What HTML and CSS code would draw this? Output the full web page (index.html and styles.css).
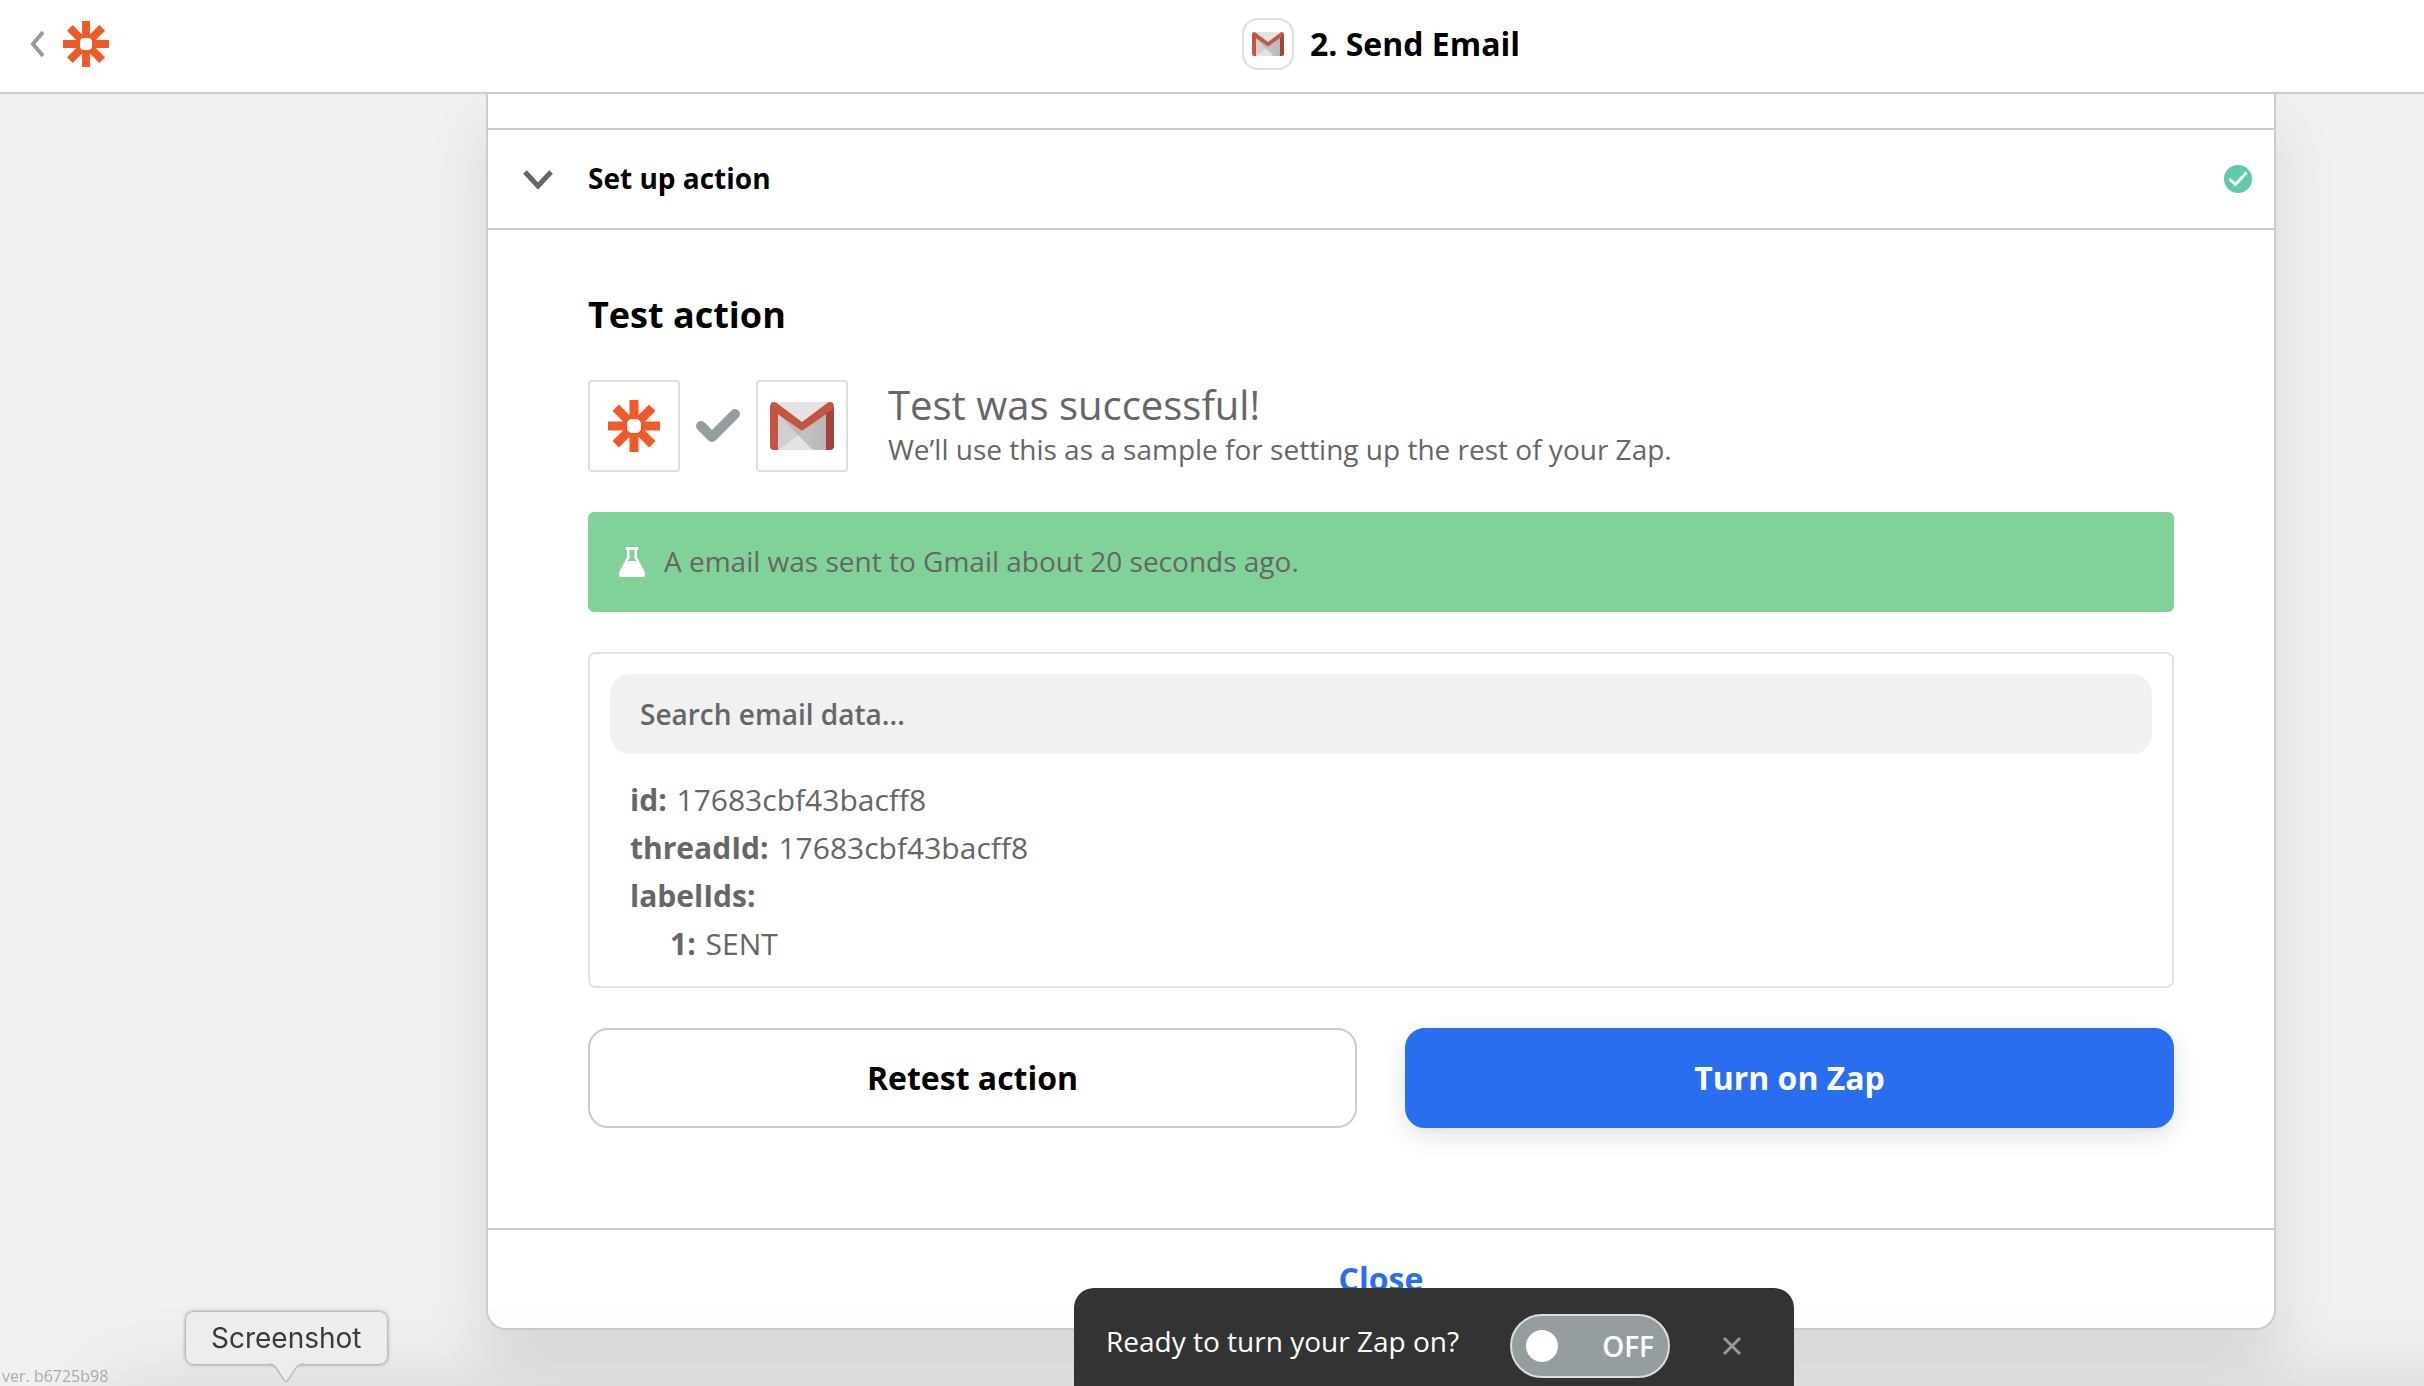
FILE: index.html
```html
<!DOCTYPE html>
<html lang="en">
<head>
<meta charset="utf-8">
<meta name="viewport" content="width=device-width, initial-scale=1">
<title>2. Send Email</title>
<link rel="stylesheet" href="styles.css">
</head>
<body>
<svg class="defs" aria-hidden="true">
  <defs>
    <linearGradient id="fold" x1="0" y1="0" x2="1" y2="0">
      <stop offset="0" stop-color="#cccccc"/>
      <stop offset="1" stop-color="#b8b8b8"/>
    </linearGradient>
  </defs>
  <symbol id="zapier" viewBox="0 0 46 46">
    <g stroke="#f05a28" stroke-width="8" fill="none">
      <path d="M23 0V17M23 29V46M0 23H17M29 23H46M6.8 6.8L18.5 18.5M27.5 27.5L39.2 39.2M39.2 6.8L27.5 18.5M18.5 27.5L6.8 39.2"/>
    </g>
    <rect x="17" y="17" width="12" height="12" rx="4" fill="#fff"/>
  </symbol>
  <symbol id="gmail" viewBox="0 0 64 48">
    <path d="M4 0H60V48H4Z" fill="#e3e3e3"/>
    <path d="M8 11L32 29L56 11V48H43L28 33L8 48Z" fill="url(#fold)"/>
    <path d="M8 11L28 33L8 48Z" fill="#d0d0d0"/>
    <path d="M8 11L17 19L32 30L28 33Z" fill="#b9b9b9"/>
    <path d="M0 4V44Q0 48 4 48H8V9Z" fill="#c75344"/>
    <path d="M64 4V44Q64 48 60 48H56V9Z" fill="#a34236"/>
    <path d="M0 5Q0 0 4 0Q6 0 8 2L32 20L56 2Q58 0 60 0Q64 0 64 5Q64 6 62 8L32 29L2 8Q0 6 0 5Z" fill="#c75344"/>
  </symbol>
</svg>

<header class="topbar">
  <div class="topbar-nav">
    <button class="back" aria-label="Back">
      <svg width="16" height="28" viewBox="0 0 16 28"><path d="M13 2L3 14L13 26" fill="none" stroke="#999" stroke-width="4"/></svg>
    </button>
    <a class="home" href="#" aria-label="Home"><svg width="46" height="46"><use href="#zapier"/></svg></a>
  </div>
  <div class="topbar-title">
    <span class="app-badge"><svg width="32" height="24"><use href="#gmail"/></svg></span>
    <h1>2. Send Email</h1>
  </div>
</header>

<main class="page">
  <article class="card">
    <div class="card-strip"></div>
    <button class="section-toggle">
      <svg width="30" height="20" viewBox="0 0 30 20"><path d="M2 3L15 17L28 3" fill="none" stroke="#666" stroke-width="5"/></svg>
      <span class="section-name">Set up action</span>
      <svg width="28" height="28" viewBox="0 0 28 28"><circle cx="14" cy="14" r="14" fill="#5fcbad"/><path d="M5.500 14L11.500 19.500L22.500 7.500" fill="none" stroke="#fff" stroke-width="3"/></svg>
    </button>

    <section class="test">
      <h2>Test action</h2>
      <div class="result">
        <div class="apps">
          <span class="app-tile"><svg width="52" height="52"><use href="#zapier"/></svg></span>
          <svg width="44" height="34" viewBox="0 0 44 34"><path d="M5 17L16 28L39 5" fill="none" stroke="#959da0" stroke-width="10" stroke-linecap="round" stroke-linejoin="round"/></svg>
          <span class="app-tile"><svg width="64" height="48"><use href="#gmail"/></svg></span>
        </div>
        <div class="result-text">
          <h3>Test was successful!</h3>
          <p>We’ll use this as a sample for setting up the rest of your Zap.</p>
        </div>
      </div>

      <div class="notice" role="status">
        <svg width="28" height="30" viewBox="0 0 28 30"><path d="M8 0H20Q21 1 20 3H19V10L27 26Q28 30 24 30H4Q0 30 1 26L9 10V3H8Q7 1 8 0ZM11.500 3V11L9.500 14H18.500L16.500 11V3Z" fill="#fff" fill-rule="evenodd"/></svg>
        <p>A email was sent to Gmail about 20 seconds ago.</p>
      </div>

      <div class="data">
        <input class="search" type="search" placeholder="Search email data..." aria-label="Search email data">
        <ul class="fields">
          <li><b>id:</b> 17683cbf43bacff8</li>
          <li><b>threadId:</b> 17683cbf43bacff8</li>
          <li><b>labelIds:</b>
            <ul><li><b>1:</b> SENT</li></ul>
          </li>
        </ul>
      </div>

      <div class="actions">
        <button class="btn">Retest action</button>
        <button class="btn btn-primary">Turn on Zap</button>
      </div>
    </section>

    <footer class="card-footer"><button class="close-link">Close</button></footer>
  </article>
</main>

<div class="edge-shadow"></div>
<small class="version">ver. b6725b98</small>
<div class="dock-tip" role="tooltip">Screenshot
  <svg class="dock-arrow" width="36" height="22" viewBox="0 0 36 22"><path d="M0 0H36V1Q31 1 28 5L20 17Q18 20 16 17L8 5Q5 1 0 1Z" fill="#ededed"/><path d="M0 2Q5 2 8 6L16 18Q18 21 20 18L28 6Q31 2 36 2" fill="none" stroke="#bdbdbd" stroke-width="1.500"/></svg>
</div>

<aside class="toast">
  <p id="zap-on">Ready to turn your Zap on?</p>
  <label class="switch">
    <input type="checkbox" role="switch" aria-labelledby="zap-on">
    <span>OFF</span>
  </label>
  <button class="dismiss" aria-label="Dismiss"><svg width="20" height="20" viewBox="0 0 20 20"><path d="M2 2L18 18M18 2L2 18" stroke="#999" stroke-width="3"/></svg></button>
</aside>
</body>
</html>
```

FILE: styles.css
```css
* { box-sizing: border-box; }

body {
  margin: 0;
  min-height: 100vh;
  background: #f1f1f1;
  color: #666;
  font: 400 28px/40px "Open Sans", "Noto Sans", sans-serif;
}

h1, h2, h3, p, ul { margin: 0; padding: 0; }
ul { list-style: none; }
svg { display: block; flex: none; }
button { font: inherit; color: inherit; background: none; border: 0; padding: 0; margin: 0; cursor: pointer; }

.defs { position: absolute; width: 0; height: 0; }

/* Top bar */
.topbar {
  position: sticky;
  top: 0;
  z-index: 2;
  display: flex;
  height: 94px;
  padding-right: 148px;
  background: #fff;
  border-bottom: 2px solid #ccc;
}
.topbar-nav {
  display: flex;
  align-items: center;
  flex: none;
  width: 486px;
  padding: 0 0 4px 30px;
  gap: 17px;
}
.topbar-title {
  display: flex;
  flex: 1;
  align-items: center;
  justify-content: center;
  gap: 16px;
  padding-bottom: 4px;
}
.app-badge {
  display: grid;
  place-items: center;
  width: 52px;
  height: 52px;
  border: 2px solid #dbdfe3;
  border-radius: 16px;
}
h1 { font-size: 32px; font-weight: 700; color: #000; }

/* Step card */
.page { padding: 0 148px 56px 486px; }
.card {
  background: #fff;
  border: 2px solid #ccc;
  border-top: 0;
  border-radius: 0 0 20px 20px;
  box-shadow: 0 32px 64px rgba(0, 0, 0, .11);
}
.card-strip { height: 36px; border-bottom: 2px solid #ccc; }
.section-toggle {
  display: flex;
  align-items: center;
  gap: 35px;
  width: 100%;
  height: 100px;
  padding: 0 22px 0 35px;
  border-bottom: 2px solid #ccc;
  text-align: left;
}
.section-name { flex: 1; padding-bottom: 2px; font-weight: 700; color: #000; }

.test { padding: 60px 100px 100px; }
h2 { font-size: 36px; line-height: 50px; font-weight: 700; color: #000; margin-bottom: 40px; }

.result { display: flex; align-items: center; gap: 40px; margin-bottom: 40px; }
.result-text { padding-bottom: 2px; }
.apps { display: flex; align-items: center; gap: 16px; }
.app-tile {
  display: grid;
  place-items: center;
  width: 92px;
  height: 92px;
  border: 2px solid #dbdfe3;
  border-radius: 4px;
}
h3 { font-size: 40px; line-height: 48px; font-weight: 400; }

.notice {
  display: flex;
  align-items: center;
  gap: 18px;
  height: 100px;
  padding: 0 30px;
  background: #81d298;
  border-radius: 6px;
  margin-bottom: 40px;
}
.notice p { padding-bottom: 2px; }

.data { padding: 20px 20px 18px; border: 2px solid #dfe3e6; border-radius: 8px; }
.search {
  display: block;
  width: 100%;
  height: 80px;
  padding: 0 30px;
  border: 0;
  border-radius: 20px;
  background: #f1f1f1;
  font: inherit;
  font-weight: 600;
  color: #666;
}
.search::placeholder { color: #666; opacity: 1; }
.fields { padding: 22px 20px 0; font-size: 30px; line-height: 48px; }
.fields ul { padding-left: 40px; }
.fields b { margin-right: 2px; }

.actions { display: grid; grid-template-columns: 1fr 1fr; gap: 48px; margin-top: 40px; }
.btn {
  height: 100px;
  border: 2px solid #ccc;
  border-radius: 20px;
  background: #fff;
  font-size: 32px;
  font-weight: 700;
  color: #000;
}
.btn-primary {
  background: #296eee;
  border-color: #296eee;
  color: #fff;
  box-shadow: 0 8px 24px rgba(0, 0, 0, .12);
}

.card-footer {
  display: flex;
  justify-content: center;
  height: 100px;
  border-top: 2px solid #ccc;
}
.close-link { font-size: 32px; font-weight: 700; color: #296eee; }

/* Overlays on the bottom edge */
.edge-shadow {
  position: fixed;
  top: 100%;
  left: 100px;
  right: -100px;
  height: 100px;
  box-shadow: 0 0 90px rgba(0, 0, 0, .12);
}
.version { position: fixed; left: 2px; bottom: 0; font-size: 16px; line-height: 20px; color: #aaa; }
.dock-tip {
  position: fixed;
  left: 186px;
  bottom: 22px;
  padding: 6px 25px;
  background: #ededed;
  border-radius: 8px;
  box-shadow: 0 0 4px rgba(0, 0, 0, .5);
  font-family: Inter, sans-serif;
  color: #3a3a3a;
}
.dock-arrow { position: absolute; top: 100%; left: 50%; margin: -2px 0 0 -18px; }
.toast {
  position: fixed;
  bottom: 0;
  left: 1074px;
  display: flex;
  align-items: center;
  width: 720px;
  height: 98px;
  padding: 18px 52px 0 32px;
  background: #333;
  border-radius: 20px 20px 0 0;
  color: #fff;
}
.toast p { flex: 1; padding-bottom: 10px; }
.switch {
  display: flex;
  align-items: center;
  justify-content: space-between;
  width: 160px;
  height: 64px;
  padding: 0 14px;
  border: 2px solid #ddd;
  border-radius: 32px;
  background: #959da0;
  font-weight: 600;
  margin-right: 52px;
}
.switch input { appearance: none; width: 32px; height: 32px; margin: 0; border-radius: 50%; background: #fff; }
```
